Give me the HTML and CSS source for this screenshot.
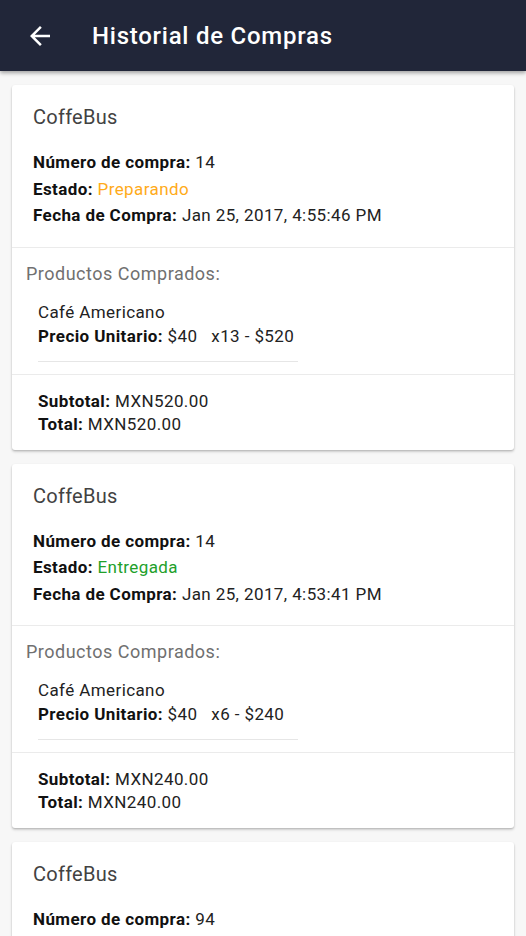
FILE: index.html
```html
<!DOCTYPE html>
<html lang="es">
<head>
<meta charset="utf-8">
<title>Historial de Compras</title>
<link rel="stylesheet" href="styles.css">
</head>
<body>
<header class="toolbar">
  <svg class="back" width="30" height="30" viewBox="0 0 24 24"><path d="M20 11H7.83l5.59-5.59L12 4l-8 8 8 8 1.41-1.41L7.83 13H20v-2z" fill="#fff"/></svg>
  <h1 class="title">Historial de Compras</h1>
</header>
<main class="list">
  <article class="card">
    <section class="info">
      <h2 class="shop">CoffeBus</h2>
      <p class="row"><b>Número de compra:</b> 14</p>
      <p class="row"><b>Estado:</b> <span class="st-prep">Preparando</span></p>
      <p class="row"><b>Fecha de Compra:</b> Jan 25, 2017, 4:55:46 PM</p>
    </section>
    <section class="products">
      <h3 class="ptitle">Productos Comprados:</h3>
      <div class="item">
        <p class="iline">Café Americano</p>
        <p class="iline"><b>Precio Unitario:</b> $40 &nbsp; x13 - $520</p>
      </div>
    </section>
    <section class="totals">
      <p class="tline"><b>Subtotal:</b> MXN520.00</p>
      <p class="tline"><b>Total:</b> MXN520.00</p>
    </section>
  </article>
  <article class="card">
    <section class="info">
      <h2 class="shop">CoffeBus</h2>
      <p class="row"><b>Número de compra:</b> 14</p>
      <p class="row"><b>Estado:</b> <span class="st-done">Entregada</span></p>
      <p class="row"><b>Fecha de Compra:</b> Jan 25, 2017, 4:53:41 PM</p>
    </section>
    <section class="products">
      <h3 class="ptitle">Productos Comprados:</h3>
      <div class="item">
        <p class="iline">Café Americano</p>
        <p class="iline"><b>Precio Unitario:</b> $40 &nbsp; x6 - $240</p>
      </div>
    </section>
    <section class="totals">
      <p class="tline"><b>Subtotal:</b> MXN240.00</p>
      <p class="tline"><b>Total:</b> MXN240.00</p>
    </section>
  </article>
  <article class="card">
    <section class="info">
      <h2 class="shop">CoffeBus</h2>
      <p class="row"><b>Número de compra:</b> 94</p>
    </section>
  </article>
</main>
</body>
</html>
```
FILE: styles.css
```css
* { box-sizing: border-box; }
html, body { margin: 0; padding: 0; }
body {
  font-family: Roboto, "Noto Sans", "Liberation Sans", sans-serif;
  background: #f7f7f7;
  color: #222;
  width: 526px;
  height: 936px;
  overflow: hidden;
}
.toolbar {
  height: 71px;
  background: #212639;
  display: flex;
  align-items: center;
  padding-left: 25px;
  box-shadow: 0 2px 4px rgba(0,0,0,0.35);
  position: relative;
  z-index: 2;
}
.back { width: 30px; height: 30px; flex: none; }
.title {
  margin: 0 0 0 37px;
  color: #fff;
  font-size: 24px;
  font-weight: 500;
  letter-spacing: 0.75px;
}
.list {
  display: flex;
  flex-direction: column;
  gap: 14px;
  padding: 14px 12px;
}
.card {
  background: #fff;
  border-radius: 3px;
  box-shadow: 0 1px 2px rgba(0,0,0,0.18), 0 2px 3px rgba(0,0,0,0.12);
}
.info {
  padding: 18px 20px 18px 21px;
  border-bottom: 1px solid #ebebeb;
}
.shop {
  margin: 0 0 18px;
  font-size: 20px;
  line-height: 28px;
  font-weight: 400;
  color: #424242;
  letter-spacing: 0.25px;
}
.row {
  margin: 0;
  font-size: 17px;
  line-height: 26.5px;
  letter-spacing: 0.4px;
  color: #222;
}
.row b, .iline b, .tline b { font-weight: 700; color: #111; }
.st-prep { color: #ffab1a; }
.st-done { color: #22a02a; }
.products {
  padding: 14px 14px 12px 14px;
  border-bottom: 1px solid #ebebeb;
}
.ptitle {
  margin: 0 0 14px;
  font-size: 18px;
  line-height: 24px;
  font-weight: 400;
  letter-spacing: 0.5px;
  color: #707070;
}
.item {
  margin-left: 12px;
  width: 260px;
  padding-bottom: 13px;
  border-bottom: 1px solid #e6e6e6;
}
.iline {
  margin: 0;
  font-size: 17px;
  line-height: 24px;
  letter-spacing: 0.4px;
  color: #222;
}
.totals {
  padding: 15px 20px 14px 26px;
}
.tline {
  margin: 0;
  font-size: 17px;
  line-height: 23px;
  letter-spacing: 0.4px;
  color: #222;
}
```
